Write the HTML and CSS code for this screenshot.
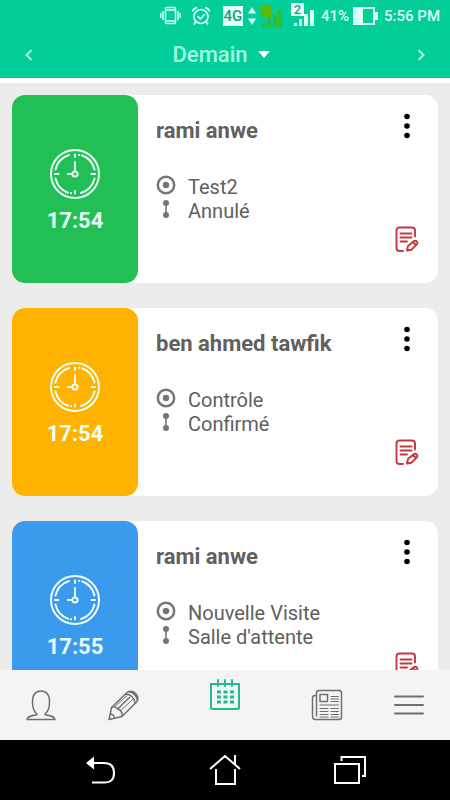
FILE: index.html
```html
<!DOCTYPE html>
<html lang="fr">
<head>
<meta charset="utf-8">
<meta name="viewport" content="width=device-width, initial-scale=1">
<title>Rendez-vous</title>
<link rel="stylesheet" href="styles.css">
</head>
<body>
<svg class="symbols" aria-hidden="true">
  <symbol id="clock" viewBox="0 0 50 50">
    <g fill="none" stroke="currentColor" stroke-width="2" stroke-linecap="round">
      <circle cx="25" cy="25" r="24"/>
      <path d="M5.500 20.500A20 20 0 0 1 19 6M32 6.300A20 20 0 0 1 44.500 20.500M44.500 29.500A20 20 0 0 1 31 44M18 43.700A20 20 0 0 1 5.500 29.500"/>
      <path d="M25 5.500v2.500M25 42v2.500M5 25h3.500M41.500 25H45M25 13V22M22 25h-4M29 5.800v.2M21 44v.2"/>
      <circle cx="25" cy="25" r="2.600"/>
    </g>
  </symbol>
  <symbol id="dots" viewBox="0 0 8 26">
    <g fill="currentColor"><circle cx="4" cy="3.500" r="2.800"/><circle cx="4" cy="13" r="2.800"/><circle cx="4" cy="22.500" r="2.800"/></g>
  </symbol>
  <symbol id="note" viewBox="0 0 24 26">
    <g fill="none" stroke="currentColor" stroke-width="1.900" stroke-linecap="round" stroke-linejoin="round">
      <path d="M8 25H4.500Q1.500 25 1.500 22V4.500Q1.500 1.500 4.500 1.500H17Q20 1.500 20 4.500V10.500"/>
      <path d="M5.500 7.500h11M5.500 11.500h11M5.500 15.500h6.500"/>
      <path d="M12 24.500l1-4.500 6-5q1.500-.800 2.800.500 1.200 1.500 0 2.800l-5.500 5.500zM18 16l2.800 3"/>
    </g>
  </symbol>
  <symbol id="target" viewBox="0 0 20 20">
    <circle cx="10" cy="10" r="8.200" fill="none" stroke="currentColor" stroke-width="2.500"/><circle cx="10" cy="10" r="3.200" fill="currentColor"/>
  </symbol>
  <symbol id="link" viewBox="0 0 20 20">
    <g fill="currentColor"><circle cx="10" cy="4" r="3"/><circle cx="10" cy="16" r="3"/><path d="M9.200 4h1.600v12H9.200z"/></g>
  </symbol>
</svg>

<header class="top">
  <div class="status">
    <svg width="21" height="20" viewBox="0 0 21 20" fill="none" stroke="currentColor" stroke-width="1.500"><rect x="5.500" y="1.500" width="10" height="16" rx="1"/><path d="M5.500 4h10M5.500 15h10M3 5v9M18 5v9M.800 7v5M20.200 7v5"/></svg>
    <svg class="alarm" width="20" height="20" viewBox="0 0 20 20" fill="none" stroke="currentColor" stroke-width="1.700"><circle cx="10" cy="10.500" r="7"/><path d="M1.500 5.500Q2.500 2 6 1.700M18.500 5.500Q17.500 2 14 1.700M5 15.500L3 18.500M15 15.500l2 3M6.500 10l2.800 2.800 4.500-4.500"/></svg>
    <span class="network">4G</span>
    <svg class="traffic" width="10" height="20" viewBox="0 0 10 20" fill="currentColor"><path d="M5 1l4 6.500H1zM5 19l4-6.500H1z"/></svg>
    <svg width="24" height="24" viewBox="0 0 24 24" fill="#3cb81c"><path d="M1 2h12v12H4z" fill="#5cb800"/><path d="M3 19h4v4H3zM8 15h4v8H8zM14 10h4v13h-4zM19 6h4v17h-4z" opacity=".8"/></svg>
    <div class="sim"><svg width="24" height="24" viewBox="0 0 24 24" fill="currentColor"><path d="M3 19h3v3H3zM8 15h3v7H8zM13 10h4v12h-4zM19 6h4v16h-4z"/></svg><span class="sim-number">2</span></div>
    <span class="percent">41%</span>
    <svg width="25" height="18" viewBox="0 0 25 18"><path d="M1 1h20v16H1z" fill="none" stroke="currentColor" stroke-width="2"/><path d="M1 1h9v16H1zM22 5h3v8h-3z" fill="currentColor"/></svg>
    <time class="now">5:56 PM</time>
  </div>
  <div class="day-bar">
    <button class="step" type="button" aria-label="Jour précédent"><svg width="8" height="12" viewBox="0 0 8 12"><path d="M6.500 1L1.500 6l5 5" fill="none" stroke="currentColor" stroke-width="2"/></svg></button>
    <button class="day" type="button">Demain<svg width="12" height="7" viewBox="0 0 12 7"><path d="M0 0h12L6 7z" fill="#fff"/></svg></button>
    <button class="step" type="button" aria-label="Jour suivant"><svg width="8" height="12" viewBox="0 0 8 12"><path d="M1.500 1l5 5-5 5" fill="none" stroke="currentColor" stroke-width="2"/></svg></button>
  </div>
</header>

<main class="list">
  <article class="card">
    <div class="slot slot-cancelled"><svg width="50" height="50"><use href="#clock"/></svg><time>17:54</time></div>
    <div class="info">
      <h2>rami anwe</h2>
      <p><svg width="20" height="20"><use href="#target"/></svg>Test2</p>
      <p><svg width="20" height="20"><use href="#link"/></svg>Annulé</p>
    </div>
    <div class="actions">
      <button class="more" type="button" aria-label="Options"><svg width="8" height="26"><use href="#dots"/></svg></button>
      <button class="note" type="button" aria-label="Modifier la note"><svg width="24" height="26"><use href="#note"/></svg></button>
    </div>
  </article>
  <article class="card">
    <div class="slot slot-confirmed"><svg width="50" height="50"><use href="#clock"/></svg><time>17:54</time></div>
    <div class="info">
      <h2>ben ahmed tawfik</h2>
      <p><svg width="20" height="20"><use href="#target"/></svg>Contrôle</p>
      <p><svg width="20" height="20"><use href="#link"/></svg>Confirmé</p>
    </div>
    <div class="actions">
      <button class="more" type="button" aria-label="Options"><svg width="8" height="26"><use href="#dots"/></svg></button>
      <button class="note" type="button" aria-label="Modifier la note"><svg width="24" height="26"><use href="#note"/></svg></button>
    </div>
  </article>
  <article class="card">
    <div class="slot slot-waiting"><svg width="50" height="50"><use href="#clock"/></svg><time>17:55</time></div>
    <div class="info">
      <h2>rami anwe</h2>
      <p><svg width="20" height="20"><use href="#target"/></svg>Nouvelle Visite</p>
      <p><svg width="20" height="20"><use href="#link"/></svg>Salle d'attente</p>
    </div>
    <div class="actions">
      <button class="more" type="button" aria-label="Options"><svg width="8" height="26"><use href="#dots"/></svg></button>
      <button class="note" type="button" aria-label="Modifier la note"><svg width="24" height="26"><use href="#note"/></svg></button>
    </div>
  </article>
</main>

<nav class="tabs">
  <a href="#profil" aria-label="Profil"><svg width="32" height="32" viewBox="0 0 32 32"><path d="M11.500 24.500C8.500 22 7.500 17.500 7.500 13 7.500 6 10.500 2 16 2s8.500 4 8.500 11c0 4.500-1 9-4 11.500l-.500 1.200c6 .8 9.500 1.500 10 4.800H2c.5-3.300 4-4 10-4.800z"/></svg></a>
  <a href="#notes" aria-label="Notes"><svg width="32" height="32" viewBox="0 0 32 32"><path d="M2 30.500L4.500 18.500 19.500 4Q23 .800 27.500 3.500 33 8 29.500 13L15 27.500zM4.500 18.500Q8 16.500 10.500 20 15.500 21 15 27.500M10.500 20L22.500 8.500M18.500 5Q26.500 5.500 28 14M21.500 2.500Q29 4 30.500 11.500M3.500 25q3.500.500 4 4.200"/><path class="fine" d="M8 17.500L20 6.500M13.500 22L25.500 10.500"/></svg></a>
  <a class="active" href="#agenda" aria-label="Agenda"><svg width="32" height="32" viewBox="0 0 32 32"><path d="M2 5h28v23.500q0 1.500-1.500 1.500h-25Q2 30 2 28.500zM9 1v6M16 1v6M23 1v6"/><path class="days" d="M8 13h17M8 18h17M8 23h17"/></svg></a>
  <a href="#actualites" aria-label="Actualités"><svg width="32" height="32" viewBox="0 0 32 32"><path d="M5.500 6.500V4Q5.500 1.500 8 1.500h20q2.500 0 2.500 2.500v24q0 2.500-2.500 2.500H4.500Q1.500 30.500 1.500 27V9Q1.500 6.500 4 6.500h1.500V27"/><path d="M9 5.500h7.500v7H9z"/><path class="fine" d="M20 7.500h7.500M20 10h7.500M20 12.500h7.500M9 16h18.500M9 19.500h8M9 22.500h8M9 25.500h8M9 28h8M20 19.500h7.500M20 22.500h7.500M20 25.500h7.500M20 28h7.500"/></svg></a>
  <a href="#menu" aria-label="Menu"><svg width="32" height="32" viewBox="0 0 32 32"><path class="bars" d="M2 7.500h28M2 16h28M2 24.500h28"/></svg></a>
</nav>

<footer class="system">
  <button type="button" aria-label="Retour"><svg width="34" height="34" viewBox="0 0 34 34"><path d="M9 10h12q10 0 10 10t-10 9.500H9"/><path d="M3 10l8-6.500v13z" fill="currentColor" stroke="none"/></svg></button>
  <button type="button" aria-label="Accueil"><svg width="34" height="34" viewBox="0 0 34 34"><path d="M2 16L17 3l15 13M8 16v15h19V16M27 2v9"/></svg></button>
  <button type="button" aria-label="Applications récentes"><svg width="34" height="34" viewBox="0 0 34 34"><path d="M2 11h24v19H2zM8.500 8V4H32v19h-3"/></svg></button>
</footer>
</body>
</html>
```
FILE: styles.css
```css
* { box-sizing: border-box; }

body {
  display: flex;
  flex-direction: column;
  height: 100vh;
  margin: 0;
  background: #ececec;
  color: #606060;
  font-family: Roboto, "Liberation Sans", sans-serif;
}

svg { display: block; flex: none; }

button {
  display: flex;
  align-items: center;
  justify-content: center;
  padding: 0;
  border: 0;
  background: none;
  color: inherit;
  font: inherit;
}

.symbols { position: absolute; width: 0; height: 0; }

.top {
  flex: none;
  border-bottom: 5px solid #fff;
  background: #03ce9a;
  color: #a4fae0;
}

.status {
  display: flex;
  align-items: center;
  justify-content: flex-end;
  height: 31px;
  padding-right: 10px;
  color: #d8fff3;
  font-size: 15px;
  font-weight: 500;
}

.alarm { margin: 0 12px 0 10px; }

.network {
  width: 20px;
  background: #e4fff7;
  color: #16a27d;
  font-size: 15px;
  line-height: 20px;
  text-align: center;
}

.traffic { margin: 0 2px 0 4px; }

.sim { position: relative; margin: 0 6px 0 8px; }

.sim-number {
  position: absolute;
  top: -1px;
  left: 0;
  width: 13px;
  background: #e4fff7;
  color: #16a27d;
  font-size: 13px;
  line-height: 13px;
  text-align: center;
}

.percent { margin-right: 4px; }
.now { margin-left: 6px; }

.day-bar {
  display: flex;
  justify-content: space-between;
  height: 47px;
  padding: 0 15px;
}

.step { width: 28px; }

.day {
  gap: 10px;
  padding-right: 8px;
  font-size: 22px;
  font-weight: 500;
}

.list {
  display: flex;
  flex: 1;
  flex-direction: column;
  gap: 25px;
  min-height: 0;
  padding: 12px 12px 0;
  overflow: hidden;
}

.card {
  display: flex;
  flex: none;
  min-height: 188px;
  border-radius: 13px;
  background: #fff;
}

.slot {
  display: flex;
  flex-direction: column;
  align-items: center;
  gap: 8px;
  width: 126px;
  padding-top: 54px;
  border-radius: 13px;
  color: #e9fff3;
  font-size: 22px;
  font-weight: 700;
  line-height: 28px;
}

.slot-cancelled { background: #22bf56; }
.slot-confirmed { background: #ffb300; }
.slot-waiting { background: #3b99ee; }

.info { flex: 1; padding: 22px 0 0 18px; }

.info h2 {
  margin: 0 0 30px;
  font-size: 22px;
  font-weight: 700;
  line-height: 28px;
}

.info p {
  display: flex;
  align-items: center;
  gap: 12px;
  margin: 0;
  font-size: 20px;
  line-height: 24px;
}

.info p svg { margin-bottom: 4px; color: #757575; }

.actions {
  display: flex;
  flex-direction: column;
  align-items: center;
  justify-content: space-between;
  padding: 18px 19px 31px 0;
}

.more { color: #000; }
.note { color: #c4373d; }

.tabs {
  display: flex;
  flex: none;
  align-items: center;
  justify-content: space-between;
  height: 70px;
  padding: 0 25px;
  background: #f4f4f4;
}

.tabs a { color: #6f6f6f; }
.tabs .active { padding: 0 20px 20px; color: #20bb93; }

.tabs path {
  fill: none;
  stroke: currentColor;
  stroke-width: 1.5;
  stroke-linecap: round;
  stroke-linejoin: round;
}

.tabs .fine { stroke-width: 1; }
.tabs .active path { stroke-width: 2; }
.tabs .active .days { stroke-width: 3; stroke-linecap: butt; stroke-dasharray: 4 2.5; }
.tabs .bars { stroke-width: 2; }

.system {
  display: flex;
  flex: none;
  align-items: center;
  justify-content: space-between;
  height: 60px;
  padding: 0 83px;
  background: #000;
  color: #fff;
}

.system svg { fill: none; stroke: currentColor; stroke-width: 2; }
```
